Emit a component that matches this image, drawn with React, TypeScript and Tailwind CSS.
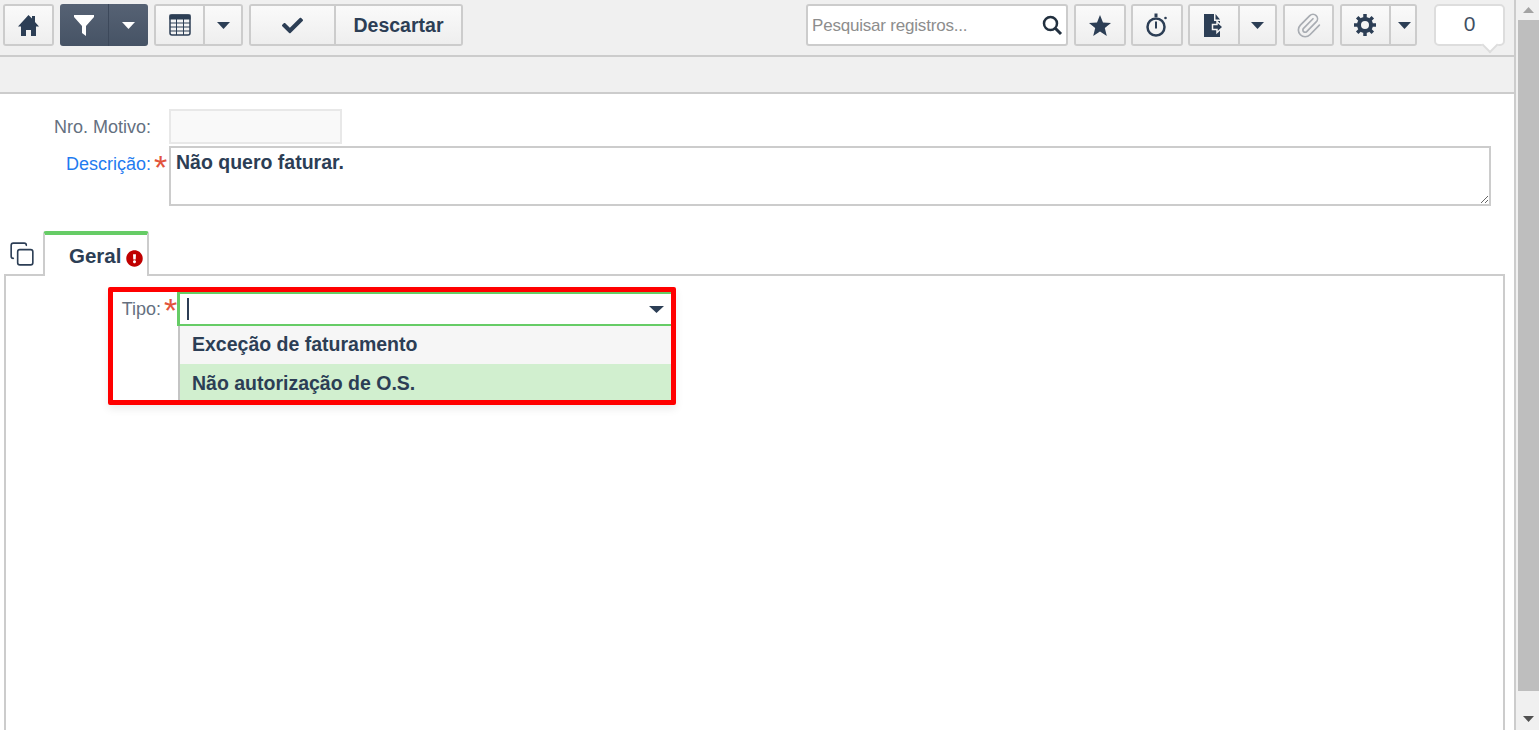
import { ReactNode } from 'react';
import { FaCheck, FaExclamationCircle } from 'react-icons/fa';
import { Copy, Paperclip } from 'lucide-react';

const Caret = ({ light }: { light?: boolean }) => (
    <svg width="13" height="7" viewBox="0 0 13 7" className={light ? 'text-white' : 'text-[#2c3e55]'}>
        <path d="M0 0h13L6.500 7z" fill="currentColor" />
    </svg>
);

const btn = 'flex h-full items-center justify-center bg-gradient-to-b from-[#fafafa] to-[#eeeeee]';

function Group({ children, className = '' }: { children: ReactNode; className?: string }) {
    return (
        <div className={`flex h-[42px] overflow-hidden rounded-[3px] border-2 border-[#cccccc] divide-x-2 divide-[#cccccc] ${className}`}>
            {children}
        </div>
    );
}

const HomeIcon = () => (
    <svg width="21" height="21" viewBox="0 0 21 21">
        <path d="M10.500 0L14 3.500V1h3v6l4 4.500h-3V21h-5v-6H8v6H3V11.500H0z" fill="#2c3e55" />
    </svg>
);

const FilterIcon = () => (
    <svg width="20" height="21" viewBox="0 0 20 21">
        <path d="M0 0h20v2l-8 9v10l-4-3v-7L0 2z" fill="#ffffff" />
    </svg>
);

const TableIcon = () => (
    <svg width="22" height="22" viewBox="0 0 22 22" fill="none" stroke="#2c3e55">
        <rect x="1" y="1" width="20" height="20" rx="2" strokeWidth="1.500" />
        <rect x="1" y="1" width="20" height="4" fill="#2c3e55" strokeWidth="1" />
        <path d="M1 9h20M1 13h20M1 17h20M7.500 5v16M14.500 5v16" strokeWidth="1" />
    </svg>
);

const StarIcon = () => (
    <svg width="22" height="21" viewBox="0 0 22 21">
        <path d="M11 0l3 7.500 8 .5-6.200 5 2 8L11 16.600 4.200 21l2-8L0 8l8-.5z" fill="#2c3e55" />
    </svg>
);

const TimerIcon = () => (
    <svg width="22" height="26" viewBox="0 0 22 26" fill="none" stroke="#2c3e55">
        <circle cx="10" cy="15" r="8.500" strokeWidth="2.500" />
        <path d="M10 1.500v3.500" strokeWidth="3" />
        <circle cx="19.500" cy="6" r="1.300" fill="#2c3e55" stroke="none" />
        <path d="M10 9.500v7" strokeWidth="2" />
    </svg>
);

const ExportIcon = () => (
    <svg width="20" height="23" viewBox="0 0 20 23">
        <path d="M0 0h10v7h6v16H0z M11.500 0L16 5.500h-4.500z" fill="#2c3e55" />
        <path d="M8.500 10.500h4.500V7.500l6 5.500-6 5.500v-3H8.500z" fill="#2c3e55" stroke="#f4f4f4" strokeWidth="1.500" />
    </svg>
);

const GearIcon = () => (
    <svg width="22" height="22" viewBox="0 0 22 22" fill="none" stroke="#2c3e55">
        <circle cx="11" cy="11" r="6" strokeWidth="4" />
        <path d="M11 0v4M11 18v4M0 11h4M18 11h4M3.200 3.200l2.800 2.800M16 16l2.800 2.800M18.800 3.200L16 6M6 16l-2.800 2.800" strokeWidth="3.500" />
    </svg>
);

const SearchIcon = () => (
    <svg width="22" height="22" viewBox="0 0 22 22" fill="none" stroke="#22303f">
        <circle cx="9.500" cy="9.500" r="6.500" strokeWidth="2.500" />
        <path d="M14.500 14.500l5.500 5.500" strokeWidth="3" />
    </svg>
);

const Asterisk = ({ className = '' }: { className?: string }) => (
    <span className={`w-[18px] pl-[3px] text-[34px] leading-[34px] text-[#e2543c] ${className}`}>*</span>
);

export default function App() {
    return (
        <div className="flex h-[730px] overflow-hidden bg-white text-[#2c3e55]" style={{ fontFamily: '"Liberation Sans", Arial, sans-serif' }}>
            <div className="flex min-w-0 flex-1 flex-col">
                <div className="flex h-[57px] shrink-0 items-start justify-between border-b-2 border-[#cccccc] bg-[#f0f0f0] pl-[3px] pr-[9px] pt-[4px]">
                    <div className="flex gap-[6px]">
                        <Group className="w-[51px]">
                            <div className={`${btn} w-full`}><HomeIcon /></div>
                        </Group>
                        <div className="flex h-[42px] w-[88px] overflow-hidden rounded-[3px] bg-gradient-to-b from-[#566274] to-[#465365]">
                            <div className="flex w-[49px] items-center justify-center border-r border-[#3c485a]"><FilterIcon /></div>
                            <div className="flex flex-1 items-center justify-center"><Caret light /></div>
                        </div>
                        <Group className="w-[89px]">
                            <div className={`${btn} w-[49px]`}><TableIcon /></div>
                            <div className={`${btn} flex-1`}><Caret /></div>
                        </Group>
                        <Group className="w-[214px]">
                            <div className={`${btn} w-[85px]`}><FaCheck size={21} /></div>
                            <div className={`${btn} flex-1 pt-[1px] text-[19.500px] font-bold`}>Descartar</div>
                        </Group>
                    </div>
                    <div className="flex">
                        <div className="flex h-[42px] w-[262px] items-center rounded-[3px] border-2 border-[#cccccc] bg-white pl-[4px] pr-[3px]">
                            <input
                                placeholder="Pesquisar registros..."
                                className="min-w-0 flex-1 bg-transparent pt-[1px] text-[17px] tracking-[-0.2px] outline-none placeholder:text-[#8d8d8d]"
                            />
                            <SearchIcon />
                        </div>
                        <Group className="ml-[6px] w-[52px]">
                            <div className={`${btn} w-full`}><StarIcon /></div>
                        </Group>
                        <Group className="ml-[5px] w-[52px]">
                            <div className={`${btn} w-full`}><TimerIcon /></div>
                        </Group>
                        <Group className="ml-[5px] w-[89px]">
                            <div className={`${btn} w-[50px]`}><ExportIcon /></div>
                            <div className={`${btn} flex-1`}><Caret /></div>
                        </Group>
                        <Group className="ml-[6px] w-[51px]">
                            <div className={`${btn} w-full text-[#a9adb3]`}><Paperclip size={27} strokeWidth={1.500} /></div>
                        </Group>
                        <Group className="ml-[6px] w-[77px]">
                            <div className={`${btn} w-[49px] pr-[2px]`}><GearIcon /></div>
                            <div className={`${btn} flex-1 pl-[3px]`}><Caret /></div>
                        </Group>
                        <div className="relative ml-[17px] flex h-[42px] w-[71px] items-center justify-center rounded-[5px] border-2 border-[#dddddd] bg-white pb-[2px] text-[21px] text-[#3f4f63]">
                            0
                            <span className="absolute -bottom-[7px] right-[7px] h-[12px] w-[12px] rotate-45 border-b-2 border-r-2 border-[#dddddd] bg-white" />
                        </div>
                    </div>
                </div>
                <div className="h-[37px] shrink-0 border-b-2 border-[#cccccc] bg-[#f0f0f0]" />

                <div className="flex-1 pl-[4px] pr-[9px]">
                    <div className="mt-[15px] flex h-[35px] items-center">
                        <label className="w-[147px] pt-[2px] text-right text-[18px] text-[#65707f]">Nro. Motivo:</label>
                        <span className="w-[18px]" />
                        <input disabled className="h-[35px] w-[173px] border-2 border-[#e8e8e8] bg-[#f9f9f9]" />
                    </div>
                    <div className="mt-[2px] flex items-start pr-[14px]">
                        <label className="w-[147px] pt-[5px] text-right text-[18px] text-[#1f7bf0]">Descrição:</label>
                        <Asterisk className="pt-[4px]" />
                        <textarea
                            defaultValue="Não quero faturar."
                            className="block h-[60px] flex-1 border-2 border-[#cccccc] px-[5px] pt-0 text-[19.500px] font-bold outline-none"
                        />
                    </div>

                    <div className="mt-[24px] flex h-[44px] items-end">
                        <div className="flex h-[44px] w-[39px] items-start pl-[5px] pt-[11px]">
                            <Copy size={26} strokeWidth={1.500} />
                        </div>
                        <div className="relative z-10 -mb-[2px] flex h-[45px] w-[106px] items-center rounded-t-[3px] border-x-2 border-[#cccccc] border-t-4 border-t-[#66cc66] bg-white pl-[24px] pt-[2px]">
                            <span className="text-[20.500px] font-bold">Geral</span>
                            <FaExclamationCircle size={17} className="ml-[5px] mt-[3px] text-[#c00000]" />
                        </div>
                    </div>
                    <div className="h-[460px] border-x-2 border-t-2 border-[#cccccc] pl-[102px] pt-[11px]">
                        <div className="flex h-[118px] w-[568px] rounded-[2px] border-[5px] border-[#ff0000] shadow-[0_4px_8px_rgba(0,0,0,0.08)]">
                            <div className="flex w-[64px] shrink-0 items-start justify-end pt-[4px]">
                                <label className="text-[18px] text-[#65707f]">Tipo:</label>
                                <Asterisk className="-mt-[3px] !w-[16px]" />
                            </div>
                            <div className="flex flex-1 flex-col">
                                <div className="flex h-[34px] shrink-0 items-center justify-between border-2 border-l-[3px] border-r-0 border-[#66cc66] pl-[7px] pr-[7px]">
                                    <span className="h-[22px] w-[2px] bg-[#2c3e55]" />
                                    <svg width="15" height="7" viewBox="0 0 15 7"><path d="M0 0h15L7.500 7z" fill="#2c3e55" /></svg>
                                </div>
                                <div className="ml-[1px] flex-1 border-l-2 border-[#c4c4c4] text-[19.500px] font-bold">
                                    <div className="flex h-[38px] items-center bg-[#f6f6f6] pl-[12px]">Exceção de faturamento</div>
                                    <div className="flex h-[36px] items-center bg-[#d1efcf] pl-[12px] pt-[3px]">Não autorização de O.S.</div>
                                </div>
                            </div>
                        </div>
                    </div>
                </div>
            </div>

            <div className="flex w-[25px] shrink-0 flex-col items-center border-l-2 border-[#cccccc] bg-[#f0f0f0] pl-[1px]">
                <div className="flex h-[20px] items-center">
                    <svg width="11" height="6" viewBox="0 0 11 6"><path d="M0 6h11L5.500 0z" fill="#a3a3a3" /></svg>
                </div>
                <div className="h-[671px] w-[21px] bg-[#bebebe]" />
                <div className="flex h-[39px] items-end pb-[8px]">
                    <svg width="11" height="6" viewBox="0 0 11 6"><path d="M0 0h11L5.500 6z" fill="#505050" /></svg>
                </div>
            </div>
        </div>
    );
}
